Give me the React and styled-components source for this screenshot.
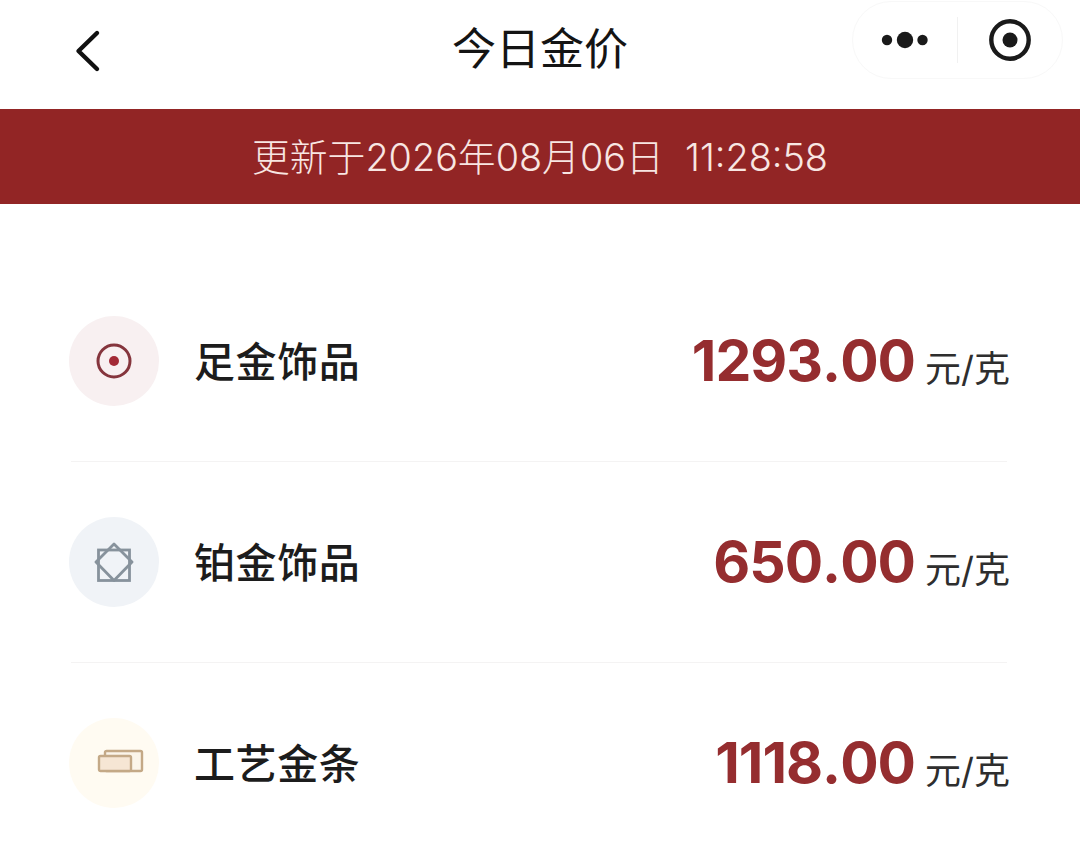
import React from "react";
import styled, { createGlobalStyle } from "styled-components";

const Global = createGlobalStyle`
  html, body { margin: 0; padding: 0; background: #fff; }
  body { font-family: Inter, "Noto Sans CJK SC", sans-serif; }
  * { box-sizing: border-box; }
`;

const Page = styled.div`
  width: 1080px;
  height: 866px;
  overflow: hidden;
  background: #fff;
`;

const Header = styled.header`
  height: 109px;
  position: relative;
  display: flex;
  align-items: center;
  justify-content: center;
  padding-bottom: 18px;
`;

const Title = styled.h1`
  margin: 0;
  font-family: "Noto Sans CJK SC", sans-serif;
  font-size: 44px;
  line-height: 60px;
  font-weight: 400;
  color: #141414;
`;

const Back = styled.svg`
  position: absolute;
  left: 70px;
  top: 26px;
  width: 36px;
  height: 50px;
`;

const Capsule = styled.div`
  position: absolute;
  left: 852px;
  top: 1px;
  width: 211px;
  height: 78px;
  border: 1px solid #f8f8f8;
  border-radius: 39px;
  display: flex;
  align-items: center;
`;

const CapsuleHalf = styled.div`
  flex: 1;
  height: 46px;
  display: flex;
  align-items: center;
  justify-content: center;
  & + & { border-left: 1px solid #f1f1f1; }
`;

const Banner = styled.div`
  height: 95px;
  background: #922525;
  color: #f8e6e2;
  display: flex;
  align-items: center;
  justify-content: center;
  font-size: 37.8px;
  line-height: 50px;
  font-weight: 300;
  font-family: Inter, "Noto Sans CJK SC", sans-serif;
  white-space: pre;
`;

const List = styled.main`
  padding: 57px 70px 0 69px;
`;

const Row = styled.section`
  height: 201px;
  position: relative;
  display: flex;
  align-items: center;
  padding-bottom: 1px;
  &:not(:last-child)::after {
    content: "";
    position: absolute;
    left: 2px;
    right: 3px;
    bottom: 0;
    height: 1px;
    background: #f4f3f3;
  }
`;

const IconCircle = styled.div`
  width: 90px;
  height: 90px;
  border-radius: 50%;
  flex: none;
  background: ${(p) => p.$bg};
  display: flex;
  align-items: center;
  justify-content: center;
`;

const BarIcon = styled.svg`
  width: 48px;
  height: 24px;
  margin-left: 14px;
  margin-bottom: 4px;
`;

const Name = styled.div`
  margin-left: 35px;
  margin-top: -5px;
  font-family: "Noto Sans CJK SC", sans-serif;
  font-size: 41px;
  letter-spacing: 0.6px;
  line-height: 56px;
  font-weight: 500;
  color: #1c1c1c;
  flex: 1;
`;

const Price = styled.div`
  font-family: Inter, sans-serif;
  font-size: 57px;
  line-height: 70px;
  font-weight: 700;
  letter-spacing: -1px;
  font-kerning: none;
  color: #952d2f;
`;

const Unit = styled.div`
  margin-left: 10px;
  margin-top: 16px;
  font-family: Inter, "Noto Sans CJK SC", sans-serif;
  font-size: 36px;
  line-height: 44px;
  color: #2e2e2e;
`;

const items = [
  {
    name: "足金饰品",
    price: "1293.00",
    bg: "#f8f0f1",
    icon: (
      <svg width="36" height="36" viewBox="0 0 36 36" fill="none">
        <circle cx="18" cy="18" r="16" stroke="#85353d" strokeWidth="3" />
        <circle cx="18" cy="18" r="5" fill="#a32a36" />
      </svg>
    ),
  },
  {
    name: "铂金饰品",
    price: "650.00",
    bg: "#f0f3f7",
    icon: (
      <svg width="40" height="40" viewBox="0 0 40 40" fill="none" stroke="#87929c" strokeWidth="2.8">
        <rect x="4.5" y="8" width="31" height="30.5" />
        <path d="M20 2 L38 20 L20 38.5 L2 20 Z" strokeLinejoin="round" />
      </svg>
    ),
  },
  {
    name: "工艺金条",
    price: "1118.00",
    bg: "#fffbf2",
    icon: (
      <BarIcon viewBox="0 0 48 24" fill="none" stroke="#c4a987" strokeWidth="2.4">
        <rect x="8" y="2" width="37" height="20" rx="1.5" fill="#fbf5ea" />
        <rect x="2" y="7" width="32" height="15" rx="1.5" fill="#f6e6d4" />
      </BarIcon>
    ),
  },
];

export default function App() {
  return (
    <Page>
      <Global />
      <Header>
        <Back viewBox="0 0 36 50" fill="none">
          <path d="M27 7 L8.5 25 L27 43" stroke="#111" strokeWidth="4.4" strokeLinecap="round" strokeLinejoin="round" />
        </Back>
        <Title>今日金价</Title>
        <Capsule>
          <CapsuleHalf>
            <svg width="48" height="20" viewBox="0 0 48 20">
              <circle cx="6" cy="10" r="5.2" fill="#1a1a1a" />
              <circle cx="24" cy="10" r="8.2" fill="#1a1a1a" />
              <circle cx="41.5" cy="10" r="5.2" fill="#1a1a1a" />
            </svg>
          </CapsuleHalf>
          <CapsuleHalf>
            <svg width="42" height="42" viewBox="0 0 42 42">
              <circle cx="21" cy="21" r="18.7" fill="none" stroke="#1a1a1a" strokeWidth="4.4" />
              <circle cx="21" cy="21" r="7.5" fill="#1a1a1a" />
            </svg>
          </CapsuleHalf>
        </Capsule>
      </Header>
      <Banner>更新于2026年08月06日  11:28:58</Banner>
      <List>
        {items.map((it) => (
          <Row key={it.name}>
            <IconCircle $bg={it.bg}>{it.icon}</IconCircle>
            <Name>{it.name}</Name>
            <Price>{it.price}</Price>
            <Unit>元/克</Unit>
          </Row>
        ))}
      </List>
    </Page>
  );
}
